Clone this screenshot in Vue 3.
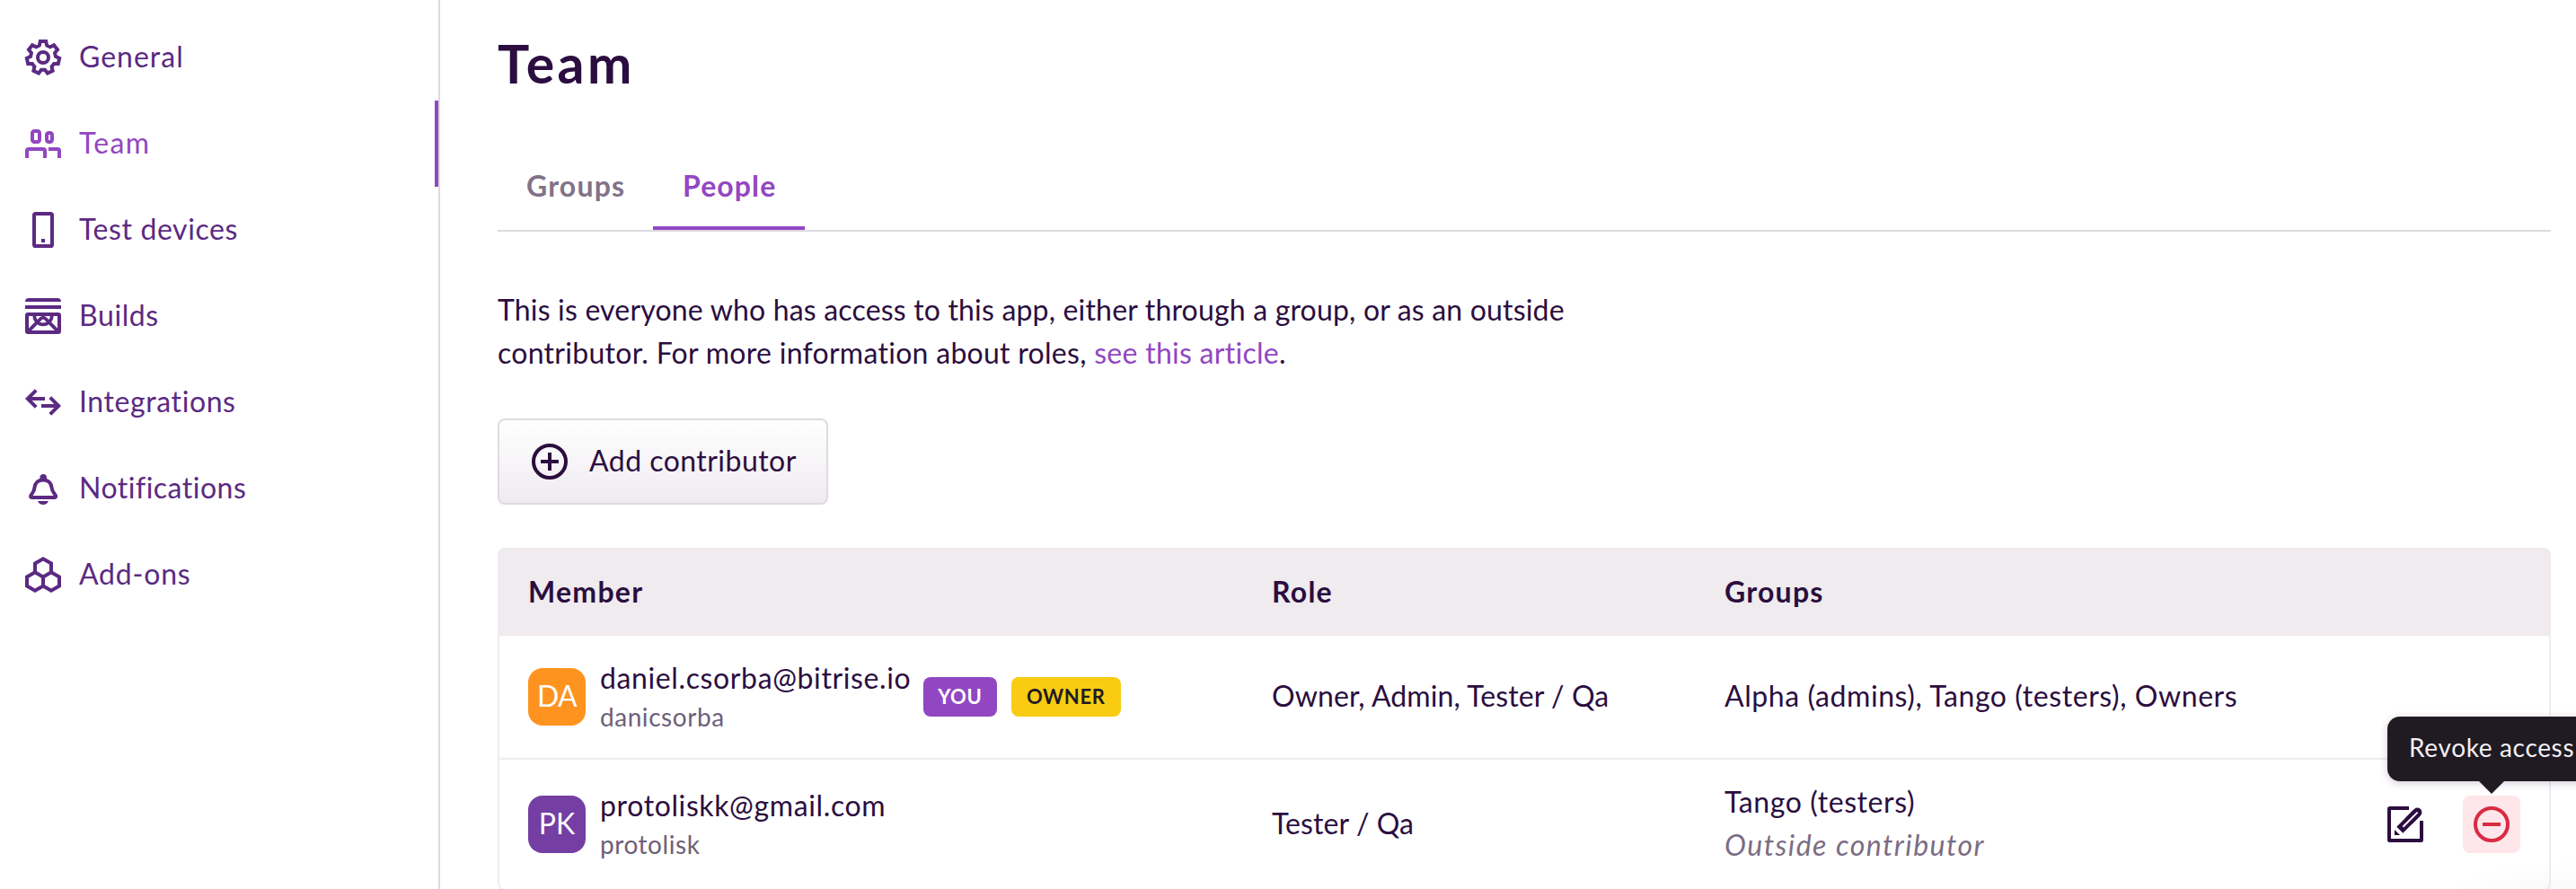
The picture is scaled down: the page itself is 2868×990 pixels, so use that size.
<script setup>
const nav = [
  { id: 'general', label: 'General' },
  { id: 'team', label: 'Team', active: true },
  { id: 'devices', label: 'Test devices' },
  { id: 'builds', label: 'Builds' },
  { id: 'integrations', label: 'Integrations' },
  { id: 'notifications', label: 'Notifications' },
  { id: 'addons', label: 'Add-ons' }
]

const members = [
  {
    initials: 'DA', tone: 'orange', email: 'daniel.csorba@bitrise.io', username: 'danicsorba',
    badges: [{ text: 'YOU', tone: 'you' }, { text: 'OWNER', tone: 'owner' }],
    roles: 'Owner, Admin, Tester / Qa', groups: 'Alpha (admins), Tango (testers), Owners', outside: false
  },
  {
    initials: 'PK', tone: 'violet', email: 'protoliskk@gmail.com', username: 'protolisk',
    badges: [], roles: 'Tester / Qa', groups: 'Tango (testers)', outside: true
  }
]

// Seven-toothed gear outline on a 24 unit grid
const gear = (() => {
  const pts = []
  const step = 360 / 7
  for (let i = 0; i < 7; i++) {
    for (const [r, d] of [[9.1, -10], [9.1, 10], [7, 17.5], [7, step - 17.5]]) {
      const a = ((i * step + d - 90) * Math.PI) / 180
      pts.push(`${(12 + r * Math.cos(a)).toFixed(2)} ${(12 + r * Math.sin(a)).toFixed(2)}`)
    }
  }
  return `M${pts.join('L')}z`
})()
</script>

<template>
  <div class="page">
    <nav class="sidebar">
      <a v-for="item in nav" :key="item.id" class="nav-item" :class="[item.id, { active: item.active }]">
        <svg class="icon" viewBox="0 0 24 24">
          <template v-if="item.id === 'general'">
            <path :d="gear" />
            <circle cx="12" cy="12" r="3" />
          </template>
          <template v-else-if="item.id === 'team'">
            <rect x="6" y="5" width="4" height="6" rx="1.1" />
            <rect x="14" y="6" width="3" height="5" rx="1.1" />
            <path d="M3 20v-4a1 1 0 0 1 1-1h8a1 1 0 0 1 1 1v4M15 15h5a1 1 0 0 1 1 1v4" />
          </template>
          <template v-else-if="item.id === 'devices'">
            <rect x="7" y="3" width="10" height="18" rx="0.8" />
            <path d="M11 18h2" />
          </template>
          <template v-else-if="item.id === 'builds'">
            <path class="solid" d="M2 4a2 2 0 0 1 2-2h16a2 2 0 0 1 2 2zM2 6h20v2H2z" />
            <rect x="3" y="11" width="18" height="10" rx="0.6" />
            <path d="M4 20.2l6.8-6.9q1.2-1 2.4 0L20 20.2" stroke-width="1.9" />
            <path d="M7.1 11.6a4.9 5.1 0 0 0 9.8 0" stroke-width="1.8" />
          </template>
          <template v-else-if="item.id === 'integrations'">
            <path d="M8.1 5.3L3.4 10l4.7 4.7M3.5 10H13M11 14h9.5M15.9 9.3l4.7 4.7-4.7 4.7" />
          </template>
          <template v-else-if="item.id === 'notifications'">
            <path d="M12 7.2c-2.9 0-4.6 1.9-4.8 4.4-.1 2.3-1.5 3.2-2.1 4.4-.2.5 0 1 .5 1h12.9c.5 0 .7-.5.5-1-.6-1.2-2-2.1-2.200-4.400-.200-2.500-1.900-4.400-4.800-4.400z" />
            <circle class="solid" cx="12.1" cy="5.9" r="1.9" />
            <path class="solid" d="M9 19h6q-.8 2-3 2t-3-2z" />
          </template>
          <template v-else>
            <path d="M7.5 10.6V5.7L12 3.100l4.500 2.600v4.900M12 13.200l-4.500-2.600L3 13.200v5.100l4.500 2.600 4.500-2.600zM12 13.200l4.500-2.600 4.500 2.600v5.100l-4.500 2.600-4.500-2.600z" />
          </template>
        </svg>
        <span class="nav-label">{{ item.label }}</span>
      </a>
    </nav>

    <main class="main">
      <h1 class="title">Team</h1>

      <div class="tabs">
        <a class="tab tab-groups">Groups</a>
        <a class="tab tab-people selected">People</a>
      </div>

      <p class="intro">
        <span class="line-a">This is everyone who has access to this app, either through a group, or as an outside</span><br>
        <span class="line-b">contributor. For more information about roles, <a class="link">see this article</a>.</span>
      </p>

      <button class="add" type="button">
        <svg class="icon" viewBox="0 0 24 24">
          <circle cx="12" cy="12" r="9" />
          <path d="M12 7v10M7 12h10" />
        </svg>
        <span class="add-label">Add contributor</span>
      </button>

      <section class="table">
        <div class="row head">
          <span>Member</span>
          <span>Role</span>
          <span>Groups</span>
        </div>
        <div v-for="m in members" :key="m.email" class="row body">
          <div class="member">
            <span class="avatar" :class="m.tone"><span>{{ m.initials }}</span></span>
            <div class="identity">
              <span class="email">{{ m.email }}</span>
              <span class="username">{{ m.username }}</span>
            </div>
            <span v-for="b in m.badges" :key="b.text" class="badge" :class="b.tone">{{ b.text }}</span>
          </div>
          <div class="roles">{{ m.roles }}</div>
          <div class="groups">
            <span>{{ m.groups }}</span>
            <em v-if="m.outside" class="outside">Outside contributor</em>
          </div>
          <div v-if="m.outside" class="actions">
            <span class="action">
              <svg class="icon" viewBox="0 0 24 24">
                <path d="M14 3H3.4a.4.4 0 0 0-.4.4v17.2c0 .2.2.4.4.4h17.200a.4.4 0 0 0 .4-.4V10" />
                <path class="pencil" d="M8.9 15.100L18 6" />
                <path class="pencil-cap" d="M14 10l4.700-4.700" />
                <path class="pencil-slit" d="M10.700 13.400l8.100-8.100" />
                <path class="solid" d="M6 15l3 3H6z" />
              </svg>
            </span>
            <span class="action revoke">
              <svg class="icon" viewBox="0 0 24 24">
                <circle cx="12" cy="12" r="9" />
                <path d="M7 12h10" />
              </svg>
              <span class="tooltip">Revoke access</span>
            </span>
          </div>
        </div>
      </section>
    </main>
  </div>
</template>

<style>
body {
  margin: 0;
  overflow: hidden;
}
</style>

<style scoped>
* {
  box-sizing: border-box;
}

.page {
  display: flex;
  width: 2868px;
  height: 990px;
  overflow: hidden;
  color: #2b0e3f;
  background: radial-gradient(ellipse 150px 46px at 2868px 1004px, #f7f7f8, #fff) #fff;
  font-family: Lato, "Noto Sans", sans-serif;
  font-size: 32px;
  line-height: 48px;
  letter-spacing: 0.6px;
}

.icon {
  flex: none;
  width: 48px;
  height: 48px;
  fill: none;
  stroke: currentColor;
  stroke-width: 2;
}

.icon .solid {
  fill: currentColor;
  stroke: none;
}

.sidebar {
  flex: none;
  width: 490px;
  padding-top: 16px;
  border-right: 2px solid #dfdae1;
}

.nav-item {
  display: flex;
  align-items: center;
  gap: 16px;
  height: 96px;
  padding-left: 24px;
  color: #5b2a82;
}

.nav-item.active {
  color: #9247c2;
  border-right: 4px solid #9247c2;
}

.nav-label {
  padding-bottom: 2px;
}

.general { letter-spacing: 1px; }
.team { letter-spacing: 1.3px; }
.notifications { letter-spacing: 0.5px; }
.addons { letter-spacing: 0.8px; }

.main {
  display: flex;
  flex: 1;
  flex-direction: column;
  align-items: flex-start;
  padding: 35px 28px 0 64px;
}

.main > * {
  flex: none;
}

.title {
  margin: 0;
  font-size: 59px;
  line-height: 72px;
  letter-spacing: 3.4px;
}

.tabs {
  display: flex;
  align-self: stretch;
  height: 102px;
  margin-top: 49px;
  border-bottom: 2px solid #dfdae1;
}

.tab {
  height: 100px;
  padding-left: 32px;
  line-height: 102px;
  font-weight: 700;
  color: #817289;
}

.tab-groups {
  width: 173px;
  letter-spacing: 1.2px;
}

.tab-people {
  width: 169px;
  padding-left: 33px;
  letter-spacing: 1.1px;
}

.tab.selected {
  color: #9247c2;
  border-bottom: 4px solid #9247c2;
}

.intro {
  margin: 63px 0 0;
  white-space: nowrap;
}

.line-a { letter-spacing: 0.18px; }
.line-b { letter-spacing: 0.28px; }

.link {
  color: #9247c2;
}

.add {
  display: flex;
  align-items: center;
  gap: 20px;
  width: 368px;
  height: 96px;
  margin-top: 49px;
  padding: 0 0 0 32px;
  border: 2px solid #dfdae1;
  border-radius: 8px;
  background: linear-gradient(#fff, #efebef);
  color: inherit;
  font: inherit;
  letter-spacing: 0.46px;
}

.add-label {
  padding-bottom: 2px;
}

.table {
  align-self: stretch;
  height: 382px;
  margin-top: 48px;
  border: 2px solid #efebef;
  border-radius: 8px;
}

.row {
  display: grid;
  grid-template-columns: 828px 504px 1fr auto;
  align-items: center;
  padding: 0 32px;
}

.head {
  height: 96px;
  padding-bottom: 2px;
  background: #efebef;
  font-weight: 700;
  letter-spacing: 1.25px;
}

.body {
  height: 138px;
  border-bottom: 2px solid #efebef;
}

.body:last-child {
  height: 144px;
  border-bottom: 0;
}

.member {
  display: flex;
  align-items: center;
}

.avatar {
  display: flex;
  align-items: center;
  justify-content: center;
  width: 64px;
  height: 64px;
  margin-right: 16px;
  padding-bottom: 2px;
  border-radius: 16px;
  color: #fff;
  letter-spacing: 0;
}

.avatar.orange {
  background: #ff9320;
  letter-spacing: -0.6px;
}

.avatar.violet { background: #743ea3; }

.identity {
  display: flex;
  flex-direction: column;
  padding-bottom: 4px;
}

.email {
  letter-spacing: 0.62px;
}

.username {
  font-size: 28px;
  line-height: 38px;
  letter-spacing: 0.55px;
  color: #6d5f78;
}

.badge {
  height: 44px;
  margin-left: 16px;
  border-radius: 8px;
  font-size: 22px;
  line-height: 44px;
  font-weight: 700;
  text-align: center;
}

.badge.you {
  width: 82px;
  margin-left: 13.5px;
  background: #9247c2;
  color: #fff;
}

.badge.owner {
  width: 122px;
  background: #f9cc13;
  color: #201b22;
  letter-spacing: 0.7px;
}

.roles {
  padding-bottom: 2px;
  letter-spacing: 0.1px;
}

.groups {
  display: flex;
  flex-direction: column;
  padding-bottom: 2px;
  letter-spacing: 0.58px;
}

.outside {
  color: #7b6d84;
  letter-spacing: 1.5px;
}

.actions {
  display: flex;
  gap: 32px;
}

.action {
  display: flex;
  align-items: center;
  justify-content: center;
  width: 64px;
  height: 64px;
  border-radius: 8px;
}

.pencil {
  stroke-width: 5;
}

.pencil-cap {
  stroke-width: 5;
  stroke-linecap: round;
}

.pencil-slit {
  stroke: #fff;
  stroke-width: 1;
}

.revoke {
  position: relative;
  background: #ffe6ea;
  color: #d92b42;
}

.tooltip {
  position: absolute;
  top: -88px;
  left: -84px;
  width: 232px;
  height: 72px;
  padding-left: 24px;
  border-radius: 14px;
  background: #201b22;
  box-shadow: 0 2px 10px rgba(43, 14, 63, 0.22);
  color: #f3eff5;
  font-size: 28px;
  line-height: 68px;
  letter-spacing: 0.66px;
  white-space: nowrap;
}

.tooltip::after {
  content: "";
  position: absolute;
  top: 72px;
  left: 102px;
  border: 14px solid transparent;
  border-top-color: #201b22;
  border-bottom: 0;
}
</style>
